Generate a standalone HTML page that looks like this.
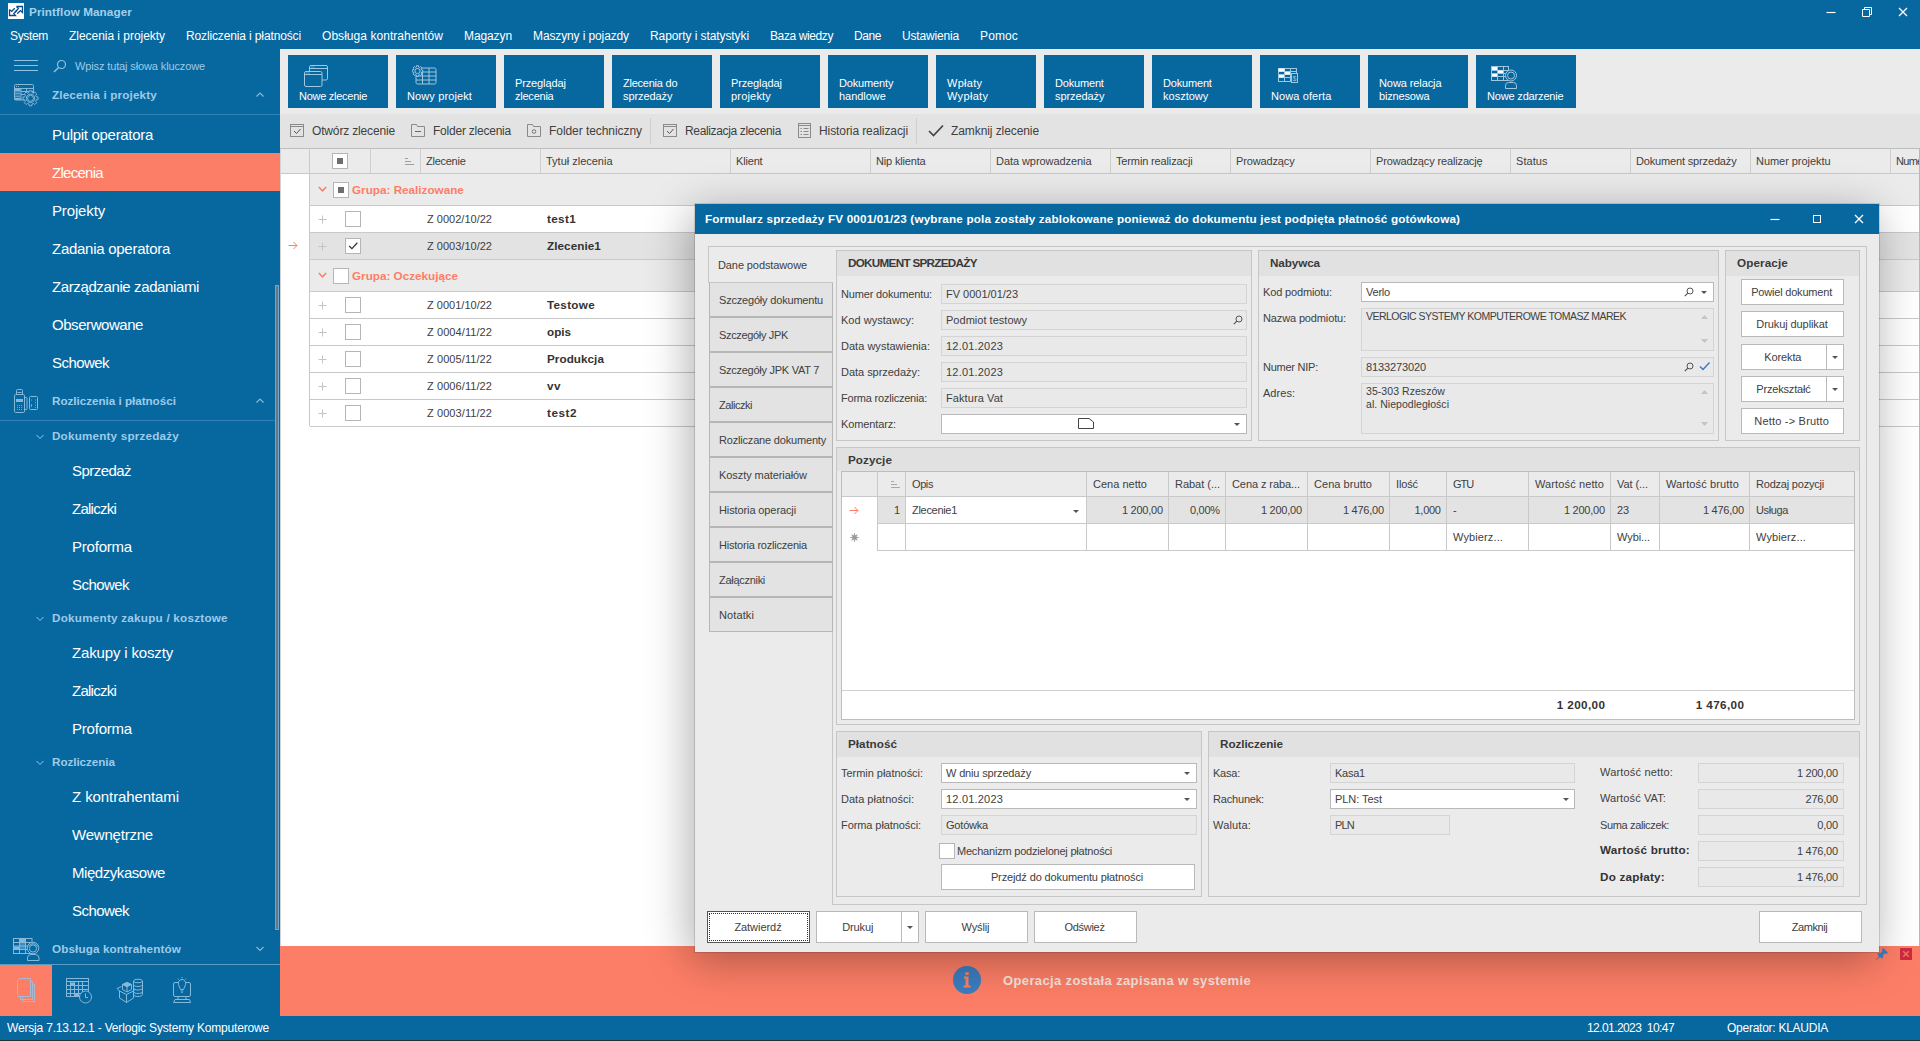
<!DOCTYPE html>
<html><head><meta charset="utf-8"><title>Printflow Manager</title>
<style>
html,body{margin:0;padding:0;}
body{width:1920px;height:1041px;overflow:hidden;background:#fff;font-family:"Liberation Sans",sans-serif;}
#r{position:relative;width:1920px;height:1041px;overflow:hidden;background:#fff;}
#r div,#r svg{position:absolute;}
</style></head><body><div id="r">
<div style="left:0px;top:0px;width:1920px;height:49px;background:#07679f;"></div>
<div style="left:0px;top:49px;width:280px;height:967px;background:#07679f;"></div>
<div style="left:0px;top:1016px;width:1920px;height:25px;background:#07679f;"></div>
<div style="left:280px;top:49px;width:1640px;height:65px;background:#ebebeb;"></div>
<div style="left:280px;top:114px;width:1640px;height:34px;background:#e3e3e3;"></div>
<svg style="left:8px;top:3px;" width="16" height="16" viewBox="0 0 16 16"><rect width="16" height="16" fill="#fff"/><g fill="none" stroke="#0b4a8a" stroke-width="1.300"><path d="M1.500 6.500V12.500H7.500L5.800 10.600L9.200 7.200M1.500 6.500L3.600 8.400L6.800 5.200"/><path d="M8.500 3.500H14.500V9.500L12.400 7.600L9.200 10.800M8.500 3.500L10.400 5.600L7 9"/></g></svg>
<div style="top:3.47px;line-height:17px;font-size:11.7px;color:#a3d0ea;white-space:pre;letter-spacing:0.093px;font-weight:bold;left:29px;">Printflow Manager</div>
<svg style="left:1826px;top:7px;" width="10" height="10" viewBox="0 0 10 10"><path d="M0.5 5.5H9.5" stroke="#fff" stroke-width="1.2" fill="none"/></svg>
<svg style="left:1862px;top:7px;" width="10" height="10" viewBox="0 0 10 10"><path d="M2.5 2.5V0.5H9.5V7.5H7.5 M0.5 2.5H7.5V9.5H0.5Z" stroke="#fff" stroke-width="1" fill="none"/></svg>
<svg style="left:1898px;top:7px;" width="10" height="10" viewBox="0 0 10 10"><path d="M1 1L9 9M9 1L1 9" stroke="#fff" stroke-width="1.3" fill="none"/></svg>
<div style="top:26.86px;line-height:18px;font-size:12px;color:#fff;white-space:pre;letter-spacing:-0.335px;left:10px;">System</div>
<div style="top:26.86px;line-height:18px;font-size:12px;color:#fff;white-space:pre;letter-spacing:-0.037px;left:69px;">Zlecenia i projekty</div>
<div style="top:26.86px;line-height:18px;font-size:12px;color:#fff;white-space:pre;letter-spacing:-0.133px;left:186px;">Rozliczenia i płatności</div>
<div style="top:26.86px;line-height:18px;font-size:12px;color:#fff;white-space:pre;letter-spacing:0.046px;left:322px;">Obsługa kontrahentów</div>
<div style="top:26.86px;line-height:18px;font-size:12px;color:#fff;white-space:pre;letter-spacing:-0.099px;left:464px;">Magazyn</div>
<div style="top:26.86px;line-height:18px;font-size:12px;color:#fff;white-space:pre;letter-spacing:-0.120px;left:533px;">Maszyny i pojazdy</div>
<div style="top:26.86px;line-height:18px;font-size:12px;color:#fff;white-space:pre;letter-spacing:-0.085px;left:650px;">Raporty i statystyki</div>
<div style="top:26.86px;line-height:18px;font-size:12px;color:#fff;white-space:pre;letter-spacing:-0.397px;left:770px;">Baza wiedzy</div>
<div style="top:26.86px;line-height:18px;font-size:12px;color:#fff;white-space:pre;letter-spacing:-0.422px;left:854px;">Dane</div>
<div style="top:26.86px;line-height:18px;font-size:12px;color:#fff;white-space:pre;letter-spacing:-0.170px;left:902px;">Ustawienia</div>
<div style="top:26.86px;line-height:18px;font-size:12px;color:#fff;white-space:pre;letter-spacing:0.130px;left:980px;">Pomoc</div>
<svg style="left:14px;top:59px;" width="24" height="14" viewBox="0 0 24 14"><path d="M0 1.5H24M0 6.5H24M0 11.5H24" stroke="#8fc3e3" stroke-width="1"/></svg>
<svg style="left:53px;top:59px;" width="14" height="14" viewBox="0 0 14 14"><circle cx="8.5" cy="5.5" r="4" stroke="#8fc3e3" stroke-width="1.2" fill="none"/><path d="M5.6 8.4L1 13" stroke="#8fc3e3" stroke-width="1.4"/></svg>
<div style="top:57.71px;line-height:17px;font-size:11px;color:#9dcbe8;white-space:pre;letter-spacing:-0.126px;left:75px;">Wpisz tutaj słowa kluczowe</div>
<div style="top:86.47px;line-height:17px;font-size:11.7px;color:#9dcbe8;white-space:pre;letter-spacing:0.153px;font-weight:bold;left:52px;">Zlecenia i projekty</div>
<svg style="left:256px;top:91px;" width="8" height="8" viewBox="0 0 8 8"><path d="M0.5 5.5L4 2L7.5 5.5" stroke="#86b8da" stroke-width="1.200" fill="none"/></svg>
<div style="left:0px;top:114px;width:280px;height:1px;background:#2f82b3;"></div>
<div style="left:0px;top:153px;width:280px;height:38px;background:#fd7e66;"></div>
<div style="top:124.32px;line-height:21px;font-size:15px;color:#fff;white-space:pre;letter-spacing:-0.307px;left:52px;">Pulpit operatora</div>
<div style="top:162.32px;line-height:21px;font-size:15px;color:#fff;white-space:pre;letter-spacing:-0.712px;left:52px;">Zlecenia</div>
<div style="top:200.32px;line-height:21px;font-size:15px;color:#fff;white-space:pre;letter-spacing:-0.148px;left:52px;">Projekty</div>
<div style="top:238.32px;line-height:21px;font-size:15px;color:#fff;white-space:pre;letter-spacing:-0.270px;left:52px;">Zadania operatora</div>
<div style="top:276.32px;line-height:21px;font-size:15px;color:#fff;white-space:pre;letter-spacing:-0.385px;left:52px;">Zarządzanie zadaniami</div>
<div style="top:314.32px;line-height:21px;font-size:15px;color:#fff;white-space:pre;letter-spacing:-0.444px;left:52px;">Obserwowane</div>
<div style="top:352.32px;line-height:21px;font-size:15px;color:#fff;white-space:pre;letter-spacing:-0.552px;left:52px;">Schowek</div>
<div style="top:392.47px;line-height:17px;font-size:11.7px;color:#9dcbe8;white-space:pre;letter-spacing:-0.036px;font-weight:bold;left:52px;">Rozliczenia i płatności</div>
<svg style="left:256px;top:397px;" width="8" height="8" viewBox="0 0 8 8"><path d="M0.5 5.5L4 2L7.5 5.5" stroke="#86b8da" stroke-width="1.200" fill="none"/></svg>
<div style="left:0px;top:420px;width:275px;height:1px;background:#2f82b3;"></div>
<svg style="left:36px;top:433px;" width="8" height="8" viewBox="0 0 8 8"><path d="M0.5 2L4 5.5L7.5 2" stroke="#9dcbe8" stroke-width="1" fill="none"/></svg>
<div style="top:427.47px;line-height:17px;font-size:11.7px;color:#9dcbe8;white-space:pre;letter-spacing:0.182px;font-weight:bold;left:52px;">Dokumenty sprzedaży</div>
<div style="top:460.32px;line-height:21px;font-size:15px;color:#fff;white-space:pre;letter-spacing:-0.546px;left:72px;">Sprzedaż</div>
<div style="top:498.32px;line-height:21px;font-size:15px;color:#fff;white-space:pre;letter-spacing:-0.750px;left:72px;">Zaliczki</div>
<div style="top:536.32px;line-height:21px;font-size:15px;color:#fff;white-space:pre;letter-spacing:-0.211px;left:72px;">Proforma</div>
<div style="top:574.32px;line-height:21px;font-size:15px;color:#fff;white-space:pre;letter-spacing:-0.552px;left:72px;">Schowek</div>
<svg style="left:36px;top:615px;" width="8" height="8" viewBox="0 0 8 8"><path d="M0.5 2L4 5.5L7.5 2" stroke="#9dcbe8" stroke-width="1" fill="none"/></svg>
<div style="top:609.47px;line-height:17px;font-size:11.7px;color:#9dcbe8;white-space:pre;letter-spacing:0.234px;font-weight:bold;left:52px;">Dokumenty zakupu / kosztowe</div>
<div style="top:642.32px;line-height:21px;font-size:15px;color:#fff;white-space:pre;letter-spacing:-0.158px;left:72px;">Zakupy i koszty</div>
<div style="top:680.32px;line-height:21px;font-size:15px;color:#fff;white-space:pre;letter-spacing:-0.750px;left:72px;">Zaliczki</div>
<div style="top:718.32px;line-height:21px;font-size:15px;color:#fff;white-space:pre;letter-spacing:-0.211px;left:72px;">Proforma</div>
<svg style="left:36px;top:759px;" width="8" height="8" viewBox="0 0 8 8"><path d="M0.5 2L4 5.5L7.5 2" stroke="#9dcbe8" stroke-width="1" fill="none"/></svg>
<div style="top:753.47px;line-height:17px;font-size:11.7px;color:#9dcbe8;white-space:pre;letter-spacing:-0.065px;font-weight:bold;left:52px;">Rozliczenia</div>
<div style="top:786.32px;line-height:21px;font-size:15px;color:#fff;white-space:pre;letter-spacing:-0.092px;left:72px;">Z kontrahentami</div>
<div style="top:824.32px;line-height:21px;font-size:15px;color:#fff;white-space:pre;letter-spacing:-0.210px;left:72px;">Wewnętrzne</div>
<div style="top:862.32px;line-height:21px;font-size:15px;color:#fff;white-space:pre;letter-spacing:-0.448px;left:72px;">Międzykasowe</div>
<div style="top:900.32px;line-height:21px;font-size:15px;color:#fff;white-space:pre;letter-spacing:-0.552px;left:72px;">Schowek</div>
<div style="top:940.47px;line-height:17px;font-size:11.7px;color:#9dcbe8;white-space:pre;letter-spacing:0.112px;font-weight:bold;left:52px;">Obsługa kontrahentów</div>
<svg style="left:256px;top:945px;" width="8" height="8" viewBox="0 0 8 8"><path d="M0.5 2L4 5.5L7.5 2" stroke="#86b8da" stroke-width="1.200" fill="none"/></svg>
<div style="left:0px;top:964px;width:280px;height:1px;background:#5a9cc4;"></div>
<div style="left:0px;top:965px;width:52px;height:51px;background:#fd7e66;"></div>
<div style="left:275px;top:285px;width:4px;height:645px;background:#6ea7cc;"></div>
<div style="left:276px;top:286px;width:2px;height:643px;background:#687883;"></div>
<div style="top:1018.86px;line-height:18px;font-size:12px;color:#fff;white-space:pre;letter-spacing:-0.182px;left:7px;">Wersja 7.13.12.1 - Verlogic Systemy Komputerowe</div>
<div style="top:1018.86px;line-height:18px;font-size:12px;color:#fff;white-space:pre;letter-spacing:-0.574px;left:1587px;">12.01.2023  10:47</div>
<div style="top:1018.86px;line-height:18px;font-size:12px;color:#fff;white-space:pre;letter-spacing:-0.258px;left:1727px;">Operator: KLAUDIA</div>
<div style="left:0px;top:1040px;width:1920px;height:1px;background:#2b2f33;"></div>
<div style="left:288px;top:55px;width:100px;height:53px;background:#07679f;"></div>
<svg style="left:304px;top:65px;" width="24" height="23" viewBox="0 0 24 23"><g fill="none" stroke="#9fc7e0" stroke-width="1"><rect x="5.500" y="0.500" width="18" height="14.500" rx="1.500"/><path d="M5.500 3.500H23.500"/><path d="M7.500 2H10.500" stroke-dasharray="1 1"/><rect x="0.500" y="6.500" width="17.500" height="15" rx="1.500" fill="#07679f"/><path d="M0.500 9.500H18"/><path d="M2.500 8H5.500" stroke-dasharray="1 1"/></g></svg>
<div style="top:87.71px;line-height:17px;font-size:11px;color:#fff;white-space:pre;letter-spacing:-0.272px;left:299px;">Nowe zlecenie</div>
<div style="left:396px;top:55px;width:100px;height:53px;background:#07679f;"></div>
<svg style="left:412px;top:64.5px;" width="25" height="20" viewBox="0 0 25 20"><g fill="none" stroke="#9fc7e0" stroke-width="1"><rect x="4" y="3" width="20" height="16" rx="1.500"/><path d="M4 7H24M4 11H24M4 15H24M10.500 7V19M17 3V19"/><path d="M10.82 5.07L10.82 6.93L9.57 7.04L9.12 8.14L9.92 9.11L8.61 10.42L7.64 9.62L6.54 10.07L6.43 11.32L4.57 11.32L4.46 10.07L3.36 9.62L2.39 10.42L1.08 9.11L1.88 8.14L1.43 7.04L0.18 6.93L0.18 5.07L1.43 4.96L1.88 3.86L1.08 2.89L2.39 1.58L3.36 2.38L4.46 1.93L4.57 0.68L6.43 0.68L6.54 1.93L7.64 2.38L8.61 1.58L9.92 2.89L9.12 3.86L9.57 4.96Z" fill="#07679f"/><circle cx="5.500" cy="6" r="2.600"/></g></svg>
<div style="top:87.71px;line-height:17px;font-size:11px;color:#fff;white-space:pre;letter-spacing:0.118px;left:407px;">Nowy projekt</div>
<div style="left:504px;top:55px;width:100px;height:53px;background:#07679f;"></div>
<div style="top:74.71px;line-height:17px;font-size:11px;color:#fff;white-space:pre;letter-spacing:-0.128px;left:515px;">Przeglądaj</div>
<div style="top:87.71px;line-height:17px;font-size:11px;color:#fff;white-space:pre;letter-spacing:-0.232px;left:515px;">zlecenia</div>
<div style="left:612px;top:55px;width:100px;height:53px;background:#07679f;"></div>
<div style="top:74.71px;line-height:17px;font-size:11px;color:#fff;white-space:pre;letter-spacing:-0.234px;left:623px;">Zlecenia do</div>
<div style="top:87.71px;line-height:17px;font-size:11px;color:#fff;white-space:pre;letter-spacing:-0.093px;left:623px;">sprzedaży</div>
<div style="left:720px;top:55px;width:100px;height:53px;background:#07679f;"></div>
<div style="top:74.71px;line-height:17px;font-size:11px;color:#fff;white-space:pre;letter-spacing:-0.128px;left:731px;">Przeglądaj</div>
<div style="top:87.71px;line-height:17px;font-size:11px;color:#fff;white-space:pre;letter-spacing:0.185px;left:731px;">projekty</div>
<div style="left:828px;top:55px;width:100px;height:53px;background:#07679f;"></div>
<div style="top:74.71px;line-height:17px;font-size:11px;color:#fff;white-space:pre;letter-spacing:-0.148px;left:839px;">Dokumenty</div>
<div style="top:87.71px;line-height:17px;font-size:11px;color:#fff;white-space:pre;letter-spacing:-0.049px;left:839px;">handlowe</div>
<div style="left:936px;top:55px;width:100px;height:53px;background:#07679f;"></div>
<div style="top:74.71px;line-height:17px;font-size:11px;color:#fff;white-space:pre;letter-spacing:0.280px;left:947px;">Wpłaty</div>
<div style="top:87.71px;line-height:17px;font-size:11px;color:#fff;white-space:pre;letter-spacing:0.325px;left:947px;">Wypłaty</div>
<div style="left:1044px;top:55px;width:100px;height:53px;background:#07679f;"></div>
<div style="top:74.71px;line-height:17px;font-size:11px;color:#fff;white-space:pre;letter-spacing:-0.179px;left:1055px;">Dokument</div>
<div style="top:87.71px;line-height:17px;font-size:11px;color:#fff;white-space:pre;letter-spacing:-0.093px;left:1055px;">sprzedaży</div>
<div style="left:1152px;top:55px;width:100px;height:53px;background:#07679f;"></div>
<div style="top:74.71px;line-height:17px;font-size:11px;color:#fff;white-space:pre;letter-spacing:-0.179px;left:1163px;">Dokument</div>
<div style="top:87.71px;line-height:17px;font-size:11px;color:#fff;white-space:pre;letter-spacing:0.008px;left:1163px;">kosztowy</div>
<div style="left:1260px;top:55px;width:100px;height:53px;background:#07679f;"></div>
<svg style="left:1278px;top:68px;" width="22" height="18" viewBox="0 0 22 18"><g fill="none" stroke="#9fc7e0" stroke-width="1"><rect x="0.5" y="0.5" width="18" height="13" fill="#07679f"/><path d="M0.5 3.5H18.5M0.5 6.500H18.5M0.5 9.5H18.5M6.5 0.5V13.500M12.500 0.5V13.5"/><rect x="0.5" y="0.5" width="6" height="3" fill="#fff" stroke="none"/><rect x="7" y="4" width="5" height="2.500" fill="#fff" stroke="none"/><rect x="1" y="7" width="5" height="2.5" fill="#fff" stroke="none"/><rect x="13.5" y="5.500" width="6" height="9" fill="#07679f"/></g><text x="16.5" y="13" font-size="7" fill="#9fc7e0" text-anchor="middle" font-family="Liberation Sans">$</text></svg>
<div style="top:87.71px;line-height:17px;font-size:11px;color:#fff;white-space:pre;letter-spacing:0.108px;left:1271px;">Nowa oferta</div>
<div style="left:1368px;top:55px;width:100px;height:53px;background:#07679f;"></div>
<div style="top:74.71px;line-height:17px;font-size:11px;color:#fff;white-space:pre;letter-spacing:-0.090px;left:1379px;">Nowa relacja</div>
<div style="top:87.71px;line-height:17px;font-size:11px;color:#fff;white-space:pre;letter-spacing:-0.164px;left:1379px;">biznesowa</div>
<div style="left:1476px;top:55px;width:100px;height:53px;background:#07679f;"></div>
<svg style="left:1491px;top:66px;" width="28" height="24" viewBox="0 0 28 24"><g fill="none" stroke="#9fc7e0" stroke-width="1"><rect x="0.5" y="0.5" width="17" height="14"/><path d="M0.5 4.500H17.5M0.5 7.5H17.5M0.5 10.500H17.5M6.5 0.5V14.5M12.5 0.500V14.5"/><rect x="1" y="1" width="5" height="3" fill="#fff" stroke="none"/><rect x="7" y="4.500" width="5" height="2.500" fill="#fff" stroke="none"/><rect x="1" y="8" width="5" height="2.500" fill="#fff" stroke="none"/><circle cx="20" cy="9.500" r="5.500" fill="#07679f"/><circle cx="20" cy="9.500" r="3.500"/><path d="M14.500 22.5V19.500a3 3 0 0 1 3-3H22.500a3 3 0 0 1 3 3V22.500Z" fill="#07679f"/></g></svg>
<div style="top:87.71px;line-height:17px;font-size:11px;color:#fff;white-space:pre;letter-spacing:-0.170px;left:1487px;">Nowe zdarzenie</div>
<svg style="left:290px;top:124px;" width="15" height="13" viewBox="0 0 15 13"><g fill="none" stroke="#8a8a8a" stroke-width="1"><rect x="0.5" y="0.5" width="13" height="12"/><path d="M0.5 2.5H13.500"/><path d="M4 7L6.500 9.500L10.500 5" stroke="#555"/></g></svg>
<div style="top:121.86px;line-height:18px;font-size:12px;color:#404040;white-space:pre;letter-spacing:-0.158px;left:312px;">Otwórz zlecenie</div>
<svg style="left:411px;top:124px;" width="15" height="13" viewBox="0 0 15 13"><g fill="none" stroke="#8a8a8a" stroke-width="1"><path d="M0.5 12.5V0.5H5.500L6.500 2.5H13.500V12.500Z"/><path d="M4 7.500H10" stroke="#666"/></g></svg>
<div style="top:121.86px;line-height:18px;font-size:12px;color:#404040;white-space:pre;letter-spacing:-0.225px;left:433px;">Folder zlecenia</div>
<svg style="left:527px;top:124px;" width="15" height="13" viewBox="0 0 15 13"><g fill="none" stroke="#8a8a8a" stroke-width="1"><path d="M0.5 12.5V0.5H5.500L6.500 2.5H13.500V12.500Z"/><circle cx="7" cy="7.500" r="1.800" stroke="#777"/></g></svg>
<div style="top:121.86px;line-height:18px;font-size:12px;color:#404040;white-space:pre;letter-spacing:-0.061px;left:549px;">Folder techniczny</div>
<div style="left:650px;top:118px;width:1px;height:26px;background:#cfcfcf;"></div>
<svg style="left:663px;top:124px;" width="15" height="13" viewBox="0 0 15 13"><g fill="none" stroke="#8a8a8a" stroke-width="1"><rect x="0.5" y="0.5" width="13" height="12"/><path d="M0.5 2.5H13.500"/><path d="M4 7L6.500 9.500L10.500 5" stroke="#555"/></g></svg>
<div style="top:121.86px;line-height:18px;font-size:12px;color:#404040;white-space:pre;letter-spacing:-0.354px;left:685px;">Realizacja zlecenia</div>
<svg style="left:797px;top:123px;" width="15" height="15" viewBox="0 0 15 15"><g fill="none" stroke="#8a8a8a" stroke-width="1"><rect x="1.5" y="0.5" width="12" height="14"/><path d="M1.5 2.500H13.5"/><path d="M3.500 5.5H5M6.500 5.500H11.5M3.5 8.500H5M6.5 8.500H11.5M3.5 11.5H5M6.500 11.5H11.5"/></g></svg>
<div style="top:121.86px;line-height:18px;font-size:12px;color:#404040;white-space:pre;letter-spacing:-0.089px;left:819px;">Historia realizacji</div>
<div style="left:916px;top:118px;width:1px;height:26px;background:#cfcfcf;"></div>
<svg style="left:928px;top:124px;" width="16" height="13" viewBox="0 0 16 13"><path d="M1 7L5.500 11.500L15 1.500" stroke="#444" stroke-width="1.700" fill="none"/></svg>
<div style="top:121.86px;line-height:18px;font-size:12px;color:#404040;white-space:pre;letter-spacing:-0.086px;left:951px;">Zamknij zlecenie</div>
<div style="left:280px;top:148px;width:1640px;height:26px;background:#ebebeb;"></div>
<div style="left:280px;top:148px;width:1640px;height:1px;background:#bdbdbd;"></div>
<div style="left:280px;top:173px;width:1640px;height:1px;background:#c9c9c9;"></div>
<div style="left:309px;top:149px;width:1px;height:24px;background:#cfcfcf;"></div>
<div style="left:370px;top:149px;width:1px;height:24px;background:#cfcfcf;"></div>
<div style="left:420px;top:149px;width:1px;height:24px;background:#cfcfcf;"></div>
<div style="top:152.71px;line-height:17px;font-size:11px;color:#404040;white-space:pre;letter-spacing:-0.260px;left:426px;">Zlecenie</div>
<div style="left:540px;top:149px;width:1px;height:24px;background:#cfcfcf;"></div>
<div style="top:152.71px;line-height:17px;font-size:11px;color:#404040;white-space:pre;letter-spacing:-0.010px;left:546px;">Tytuł zlecenia</div>
<div style="left:730px;top:149px;width:1px;height:24px;background:#cfcfcf;"></div>
<div style="top:152.71px;line-height:17px;font-size:11px;color:#404040;white-space:pre;letter-spacing:-0.170px;left:736px;">Klient</div>
<div style="left:870px;top:149px;width:1px;height:24px;background:#cfcfcf;"></div>
<div style="top:152.71px;line-height:17px;font-size:11px;color:#404040;white-space:pre;letter-spacing:-0.169px;left:876px;">Nip klienta</div>
<div style="left:990px;top:149px;width:1px;height:24px;background:#cfcfcf;"></div>
<div style="top:152.71px;line-height:17px;font-size:11px;color:#404040;white-space:pre;letter-spacing:-0.065px;left:996px;">Data wprowadzenia</div>
<div style="left:1110px;top:149px;width:1px;height:24px;background:#cfcfcf;"></div>
<div style="top:152.71px;line-height:17px;font-size:11px;color:#404040;white-space:pre;letter-spacing:-0.139px;left:1116px;">Termin realizacji</div>
<div style="left:1230px;top:149px;width:1px;height:24px;background:#cfcfcf;"></div>
<div style="top:152.71px;line-height:17px;font-size:11px;color:#404040;white-space:pre;letter-spacing:-0.142px;left:1236px;">Prowadzący</div>
<div style="left:1370px;top:149px;width:1px;height:24px;background:#cfcfcf;"></div>
<div style="top:152.71px;line-height:17px;font-size:11px;color:#404040;white-space:pre;letter-spacing:-0.140px;left:1376px;">Prowadzący realizację</div>
<div style="left:1510px;top:149px;width:1px;height:24px;background:#cfcfcf;"></div>
<div style="top:152.71px;line-height:17px;font-size:11px;color:#404040;white-space:pre;letter-spacing:0.053px;left:1516px;">Status</div>
<div style="left:1630px;top:149px;width:1px;height:24px;background:#cfcfcf;"></div>
<div style="top:152.71px;line-height:17px;font-size:11px;color:#404040;white-space:pre;letter-spacing:-0.157px;left:1636px;">Dokument sprzedaży</div>
<div style="left:1750px;top:149px;width:1px;height:24px;background:#cfcfcf;"></div>
<div style="top:152.71px;line-height:17px;font-size:11px;color:#404040;white-space:pre;letter-spacing:-0.050px;left:1756px;">Numer projektu</div>
<div style="left:1890px;top:149px;width:1px;height:24px;background:#cfcfcf;"></div>
<div style="top:152.71px;line-height:17px;font-size:11px;color:#404040;white-space:pre;letter-spacing:-0.701px;left:1896px;">Numer</div>
<div style="left:309px;top:148px;width:1px;height:278px;background:#c9c9c9;"></div>
<div style="left:332px;top:153px;width:16px;height:16px;background:#fff;border:1px solid #b5b5b5;box-sizing:border-box;"><div style="left:4px;top:4px;width:6px;height:6px;background:#6e6e6e"></div></div>
<svg style="left:405px;top:157px;" width="9" height="8" viewBox="0 0 9 8"><path d="M0 1.500H3M0 4.500H6M0 7.500H9" stroke="#a0a0a0" stroke-width="1"/></svg>
<div style="left:310px;top:174px;width:1610px;height:32px;background:#ebebeb;"></div>
<div style="left:310px;top:205px;width:1610px;height:1px;background:#c9c9c9;"></div>
<svg style="left:318px;top:186px;" width="9" height="7" viewBox="0 0 9 7"><path d="M0.800 1L4.500 4.800L8.200 1" stroke="#fd7e66" stroke-width="1.500" fill="none"/></svg>
<div style="left:333px;top:182px;width:16px;height:16px;background:#fff;border:1px solid #b5b5b5;box-sizing:border-box;"><div style="left:4px;top:4px;width:6px;height:6px;background:#6e6e6e"></div></div>
<div style="top:181.47px;line-height:17px;font-size:11.7px;color:#fd7e66;white-space:pre;letter-spacing:0.010px;font-weight:bold;left:352px;">Grupa: Realizowane</div>
<div style="left:310px;top:206px;width:1610px;height:27px;background:#fff;"></div>
<div style="left:310px;top:232px;width:1610px;height:1px;background:#c9c9c9;"></div>
<svg style="left:318px;top:215px;" width="9" height="9" viewBox="0 0 9 9"><path d="M4.500 0.500V8.500M0.500 4.500H8.500" stroke="#c4c4c4" stroke-width="1"/></svg>
<div style="left:345px;top:211px;width:16px;height:16px;background:#fff;border:1px solid #b5b5b5;box-sizing:border-box;"></div>
<div style="top:210.71px;line-height:17px;font-size:11px;color:#404040;white-space:pre;letter-spacing:0.014px;left:427px;">Z 0002/10/22</div>
<div style="top:210.47px;line-height:17px;font-size:11.7px;color:#333;white-space:pre;letter-spacing:0.337px;font-weight:bold;left:547px;">test1</div>
<div style="left:310px;top:233px;width:1610px;height:27px;background:#e3e3e3;"></div>
<div style="left:310px;top:259px;width:1610px;height:1px;background:#c9c9c9;"></div>
<svg style="left:318px;top:242px;" width="9" height="9" viewBox="0 0 9 9"><path d="M4.500 0.500V8.500M0.500 4.500H8.500" stroke="#c4c4c4" stroke-width="1"/></svg>
<div style="left:345px;top:238px;width:16px;height:16px;background:#fff;border:1px solid #b5b5b5;box-sizing:border-box;"><svg style="left:1px;top:1px" width="12" height="12" viewBox="0 0 11 11"><path d="M2 5.500L4.500 8L9.500 2.500" stroke="#333" stroke-width="1.100" fill="none"/></svg></div>
<div style="top:237.71px;line-height:17px;font-size:11px;color:#404040;white-space:pre;letter-spacing:0.014px;left:427px;">Z 0003/10/22</div>
<div style="top:237.47px;line-height:17px;font-size:11.7px;color:#333;white-space:pre;letter-spacing:0.074px;font-weight:bold;left:547px;">Zlecenie1</div>
<div style="left:310px;top:260px;width:1610px;height:32px;background:#ebebeb;"></div>
<div style="left:310px;top:291px;width:1610px;height:1px;background:#c9c9c9;"></div>
<svg style="left:318px;top:272px;" width="9" height="7" viewBox="0 0 9 7"><path d="M0.800 1L4.500 4.800L8.200 1" stroke="#fd7e66" stroke-width="1.500" fill="none"/></svg>
<div style="left:333px;top:268px;width:16px;height:16px;background:#fff;border:1px solid #b5b5b5;box-sizing:border-box;"></div>
<div style="top:267.47px;line-height:17px;font-size:11.7px;color:#fd7e66;white-space:pre;letter-spacing:0.000px;font-weight:bold;left:352px;">Grupa: Oczekujące</div>
<div style="left:310px;top:292px;width:1610px;height:27px;background:#fff;"></div>
<div style="left:310px;top:318px;width:1610px;height:1px;background:#c9c9c9;"></div>
<svg style="left:318px;top:301px;" width="9" height="9" viewBox="0 0 9 9"><path d="M4.500 0.500V8.500M0.500 4.500H8.500" stroke="#c4c4c4" stroke-width="1"/></svg>
<div style="left:345px;top:297px;width:16px;height:16px;background:#fff;border:1px solid #b5b5b5;box-sizing:border-box;"></div>
<div style="top:296.71px;line-height:17px;font-size:11px;color:#404040;white-space:pre;letter-spacing:0.014px;left:427px;">Z 0001/10/22</div>
<div style="top:296.47px;line-height:17px;font-size:11.7px;color:#333;white-space:pre;letter-spacing:0.294px;font-weight:bold;left:547px;">Testowe</div>
<div style="left:310px;top:319px;width:1610px;height:27px;background:#fff;"></div>
<div style="left:310px;top:345px;width:1610px;height:1px;background:#c9c9c9;"></div>
<svg style="left:318px;top:328px;" width="9" height="9" viewBox="0 0 9 9"><path d="M4.500 0.500V8.500M0.500 4.500H8.500" stroke="#c4c4c4" stroke-width="1"/></svg>
<div style="left:345px;top:324px;width:16px;height:16px;background:#fff;border:1px solid #b5b5b5;box-sizing:border-box;"></div>
<div style="top:323.71px;line-height:17px;font-size:11px;color:#404040;white-space:pre;letter-spacing:0.082px;left:427px;">Z 0004/11/22</div>
<div style="top:323.47px;line-height:17px;font-size:11.7px;color:#333;white-space:pre;letter-spacing:-0.013px;font-weight:bold;left:547px;">opis</div>
<div style="left:310px;top:346px;width:1610px;height:27px;background:#fff;"></div>
<div style="left:310px;top:372px;width:1610px;height:1px;background:#c9c9c9;"></div>
<svg style="left:318px;top:355px;" width="9" height="9" viewBox="0 0 9 9"><path d="M4.500 0.500V8.500M0.500 4.500H8.500" stroke="#c4c4c4" stroke-width="1"/></svg>
<div style="left:345px;top:351px;width:16px;height:16px;background:#fff;border:1px solid #b5b5b5;box-sizing:border-box;"></div>
<div style="top:350.71px;line-height:17px;font-size:11px;color:#404040;white-space:pre;letter-spacing:0.082px;left:427px;">Z 0005/11/22</div>
<div style="top:350.47px;line-height:17px;font-size:11.7px;color:#333;white-space:pre;letter-spacing:0.048px;font-weight:bold;left:547px;">Produkcja</div>
<div style="left:310px;top:373px;width:1610px;height:27px;background:#fff;"></div>
<div style="left:310px;top:399px;width:1610px;height:1px;background:#c9c9c9;"></div>
<svg style="left:318px;top:382px;" width="9" height="9" viewBox="0 0 9 9"><path d="M4.500 0.500V8.500M0.500 4.500H8.500" stroke="#c4c4c4" stroke-width="1"/></svg>
<div style="left:345px;top:378px;width:16px;height:16px;background:#fff;border:1px solid #b5b5b5;box-sizing:border-box;"></div>
<div style="top:377.71px;line-height:17px;font-size:11px;color:#404040;white-space:pre;letter-spacing:0.082px;left:427px;">Z 0006/11/22</div>
<div style="top:377.47px;line-height:17px;font-size:11.7px;color:#333;white-space:pre;letter-spacing:0.493px;font-weight:bold;left:547px;">vv</div>
<div style="left:310px;top:400px;width:1610px;height:27px;background:#fff;"></div>
<div style="left:310px;top:426px;width:1610px;height:1px;background:#c9c9c9;"></div>
<svg style="left:318px;top:409px;" width="9" height="9" viewBox="0 0 9 9"><path d="M4.500 0.500V8.500M0.500 4.500H8.500" stroke="#c4c4c4" stroke-width="1"/></svg>
<div style="left:345px;top:405px;width:16px;height:16px;background:#fff;border:1px solid #b5b5b5;box-sizing:border-box;"></div>
<div style="top:404.71px;line-height:17px;font-size:11px;color:#404040;white-space:pre;letter-spacing:0.082px;left:427px;">Z 0003/11/22</div>
<div style="top:404.47px;line-height:17px;font-size:11.7px;color:#333;white-space:pre;letter-spacing:0.537px;font-weight:bold;left:547px;">test2</div>
<div style="left:1919px;top:148px;width:1px;height:798px;background:#b8b8b8;"></div>
<div style="left:280px;top:149px;width:1px;height:797px;background:#d0d3d5;"></div>
<svg style="left:288px;top:241px;" width="10" height="9" viewBox="0 0 10 9"><path d="M0.500 4.500H9M5.500 1L9 4.500L5.500 8" stroke="#fd7e66" stroke-width="1" fill="none"/></svg>
<div style="left:280px;top:946px;width:1640px;height:70px;background:#fd7e66;"></div>
<svg style="left:953px;top:966px;" width="28" height="28" viewBox="0 0 28 28"><circle cx="14" cy="14" r="14" fill="#3b7dbf"/><path d="M11 10.500H15.500V19.500H17.500V21.500H10.500V19.500H12.500V12.500H11Z M12.300 6.200H15.700V9H12.300Z" fill="#fd7e66"/></svg>
<div style="top:971.02px;line-height:19px;font-size:13px;color:#f7e4de;white-space:pre;letter-spacing:0.366px;font-weight:bold;left:1003px;">Operacja została zapisana w systemie</div>
<svg style="left:1876px;top:948px;" width="12" height="12" viewBox="0 0 12 12"><path d="M6.200 0.500L7.500 0.300L11.700 4.600L11.300 5.800L8.600 5.600L7 7.500L7 10L5.800 10.600L4 9L0.500 12L0.200 11.600L3 8L1.500 6.500L1.800 5.300L4.500 5L6.300 3.300Z" fill="#3a7fc5"/></svg>
<div style="left:1900px;top:948px;width:12px;height:12px;background:#cf2a40;"><svg style="left:3px;top:3px" width="6" height="6"><path d="M0.300 0.300L5.700 5.700M5.700 0.300L0.300 5.700" stroke="#f47a64" stroke-width="1.400"/></svg></div>
<div style="left:695px;top:204px;width:1184px;height:748px;background:#ebebeb;box-shadow:0 0 0 1px rgba(0,0,0,0.13),-4px 8px 42px 0 rgba(0,0,0,0.33);"></div>
<div style="left:695px;top:204px;width:1184px;height:30px;background:#07679f;"></div>
<div style="top:209.97px;line-height:18px;font-size:11.7px;color:#fff;white-space:pre;letter-spacing:0.173px;font-weight:bold;left:705px;">Formularz sprzedaży FV 0001/01/23 (wybrane pola zostały zablokowane ponieważ do dokumentu jest podpięta płatność gotówkowa)</div>
<svg style="left:1770px;top:214px;" width="10" height="10" viewBox="0 0 10 10"><path d="M0.500 5.500H9.500" stroke="#fff" stroke-width="1.200" fill="none"/></svg>
<svg style="left:1812px;top:214px;" width="10" height="10" viewBox="0 0 10 10"><rect x="1.500" y="1.500" width="7" height="7" stroke="#fff" stroke-width="1" fill="none"/></svg>
<svg style="left:1854px;top:214px;" width="10" height="10" viewBox="0 0 10 10"><path d="M1 1L9 9M9 1L1 9" stroke="#fff" stroke-width="1.400" fill="none"/></svg>
<div style="left:832px;top:246px;width:1035px;height:659px;background:#ebebeb;border:1px solid #c6c6c6;box-sizing:border-box;"></div>
<div style="left:709px;top:282px;width:124px;height:35px;background:#e3e3e3;border:1px solid #b6b6b6;box-sizing:border-box;"></div>
<div style="top:291.71px;line-height:17px;font-size:11px;color:#404040;white-space:pre;letter-spacing:-0.190px;left:719px;">Szczegóły dokumentu</div>
<div style="left:709px;top:317px;width:124px;height:35px;background:#e3e3e3;border:1px solid #b6b6b6;box-sizing:border-box;"></div>
<div style="top:326.71px;line-height:17px;font-size:11px;color:#404040;white-space:pre;letter-spacing:-0.336px;left:719px;">Szczegóły JPK</div>
<div style="left:709px;top:352px;width:124px;height:35px;background:#e3e3e3;border:1px solid #b6b6b6;box-sizing:border-box;"></div>
<div style="top:361.71px;line-height:17px;font-size:11px;color:#404040;white-space:pre;letter-spacing:-0.271px;left:719px;">Szczegóły JPK VAT 7</div>
<div style="left:709px;top:387px;width:124px;height:35px;background:#e3e3e3;border:1px solid #b6b6b6;box-sizing:border-box;"></div>
<div style="top:396.71px;line-height:17px;font-size:11px;color:#404040;white-space:pre;letter-spacing:-0.459px;left:719px;">Zaliczki</div>
<div style="left:709px;top:422px;width:124px;height:35px;background:#e3e3e3;border:1px solid #b6b6b6;box-sizing:border-box;"></div>
<div style="top:431.71px;line-height:17px;font-size:11px;color:#404040;white-space:pre;letter-spacing:-0.183px;left:719px;">Rozliczane dokumenty</div>
<div style="left:709px;top:457px;width:124px;height:35px;background:#e3e3e3;border:1px solid #b6b6b6;box-sizing:border-box;"></div>
<div style="top:466.71px;line-height:17px;font-size:11px;color:#404040;white-space:pre;letter-spacing:-0.074px;left:719px;">Koszty materiałów</div>
<div style="left:709px;top:492px;width:124px;height:35px;background:#e3e3e3;border:1px solid #b6b6b6;box-sizing:border-box;"></div>
<div style="top:501.71px;line-height:17px;font-size:11px;color:#404040;white-space:pre;letter-spacing:-0.110px;left:719px;">Historia operacji</div>
<div style="left:709px;top:527px;width:124px;height:35px;background:#e3e3e3;border:1px solid #b6b6b6;box-sizing:border-box;"></div>
<div style="top:536.71px;line-height:17px;font-size:11px;color:#404040;white-space:pre;letter-spacing:-0.216px;left:719px;">Historia rozliczenia</div>
<div style="left:709px;top:562px;width:124px;height:35px;background:#e3e3e3;border:1px solid #b6b6b6;box-sizing:border-box;"></div>
<div style="top:571.71px;line-height:17px;font-size:11px;color:#404040;white-space:pre;letter-spacing:-0.291px;left:719px;">Załączniki</div>
<div style="left:709px;top:597px;width:124px;height:35px;background:#e3e3e3;border:1px solid #b6b6b6;box-sizing:border-box;"></div>
<div style="top:606.71px;line-height:17px;font-size:11px;color:#404040;white-space:pre;letter-spacing:0.109px;left:719px;">Notatki</div>
<div style="left:708px;top:246px;width:125px;height:37px;background:#ebebeb;border:1px solid #c6c6c6;box-sizing:border-box;border-right:none;"></div>
<div style="top:256.71px;line-height:17px;font-size:11px;color:#404040;white-space:pre;letter-spacing:-0.100px;left:718px;">Dane podstawowe</div>
<div style="left:836px;top:250px;width:416px;height:191px;background:#ebebeb;border:1px solid #c6c6c6;box-sizing:border-box;"></div>
<div style="left:837px;top:251px;width:414px;height:25px;background:#e1e1e1;"></div>
<div style="top:254.47px;line-height:17px;font-size:11.7px;color:#3a3a3a;white-space:pre;letter-spacing:-0.706px;font-weight:bold;left:848px;">DOKUMENT SPRZEDAŻY</div>
<div style="top:285.71px;line-height:17px;font-size:11px;color:#404040;white-space:pre;letter-spacing:-0.159px;left:841px;">Numer dokumentu:</div>
<div style="left:941px;top:284px;width:306px;height:20px;background:#e9e9e9;border:1px solid #d4d4d4;box-sizing:border-box;"></div>
<div style="top:285.71px;line-height:17px;font-size:11px;color:#404040;white-space:pre;letter-spacing:-0.013px;left:946px;">FV 0001/01/23</div>
<div style="top:311.71px;line-height:17px;font-size:11px;color:#404040;white-space:pre;letter-spacing:0.019px;left:841px;">Kod wystawcy:</div>
<div style="left:941px;top:310px;width:306px;height:20px;background:#e9e9e9;border:1px solid #d4d4d4;box-sizing:border-box;"></div>
<div style="top:311.71px;line-height:17px;font-size:11px;color:#404040;white-space:pre;letter-spacing:0.020px;left:946px;">Podmiot testowy</div>
<div style="top:337.71px;line-height:17px;font-size:11px;color:#404040;white-space:pre;letter-spacing:0.021px;left:841px;">Data wystawienia:</div>
<div style="left:941px;top:336px;width:306px;height:20px;background:#e9e9e9;border:1px solid #d4d4d4;box-sizing:border-box;"></div>
<div style="top:337.71px;line-height:17px;font-size:11px;color:#404040;white-space:pre;letter-spacing:0.195px;left:946px;">12.01.2023</div>
<div style="top:363.71px;line-height:17px;font-size:11px;color:#404040;white-space:pre;letter-spacing:-0.032px;left:841px;">Data sprzedaży:</div>
<div style="left:941px;top:362px;width:306px;height:20px;background:#e9e9e9;border:1px solid #d4d4d4;box-sizing:border-box;"></div>
<div style="top:363.71px;line-height:17px;font-size:11px;color:#404040;white-space:pre;letter-spacing:0.195px;left:946px;">12.01.2023</div>
<div style="top:389.71px;line-height:17px;font-size:11px;color:#404040;white-space:pre;letter-spacing:-0.215px;left:841px;">Forma rozliczenia:</div>
<div style="left:941px;top:388px;width:306px;height:20px;background:#e9e9e9;border:1px solid #d4d4d4;box-sizing:border-box;"></div>
<div style="top:389.71px;line-height:17px;font-size:11px;color:#404040;white-space:pre;letter-spacing:0.087px;left:946px;">Faktura Vat</div>
<div style="top:415.71px;line-height:17px;font-size:11px;color:#404040;white-space:pre;letter-spacing:-0.125px;left:841px;">Komentarz:</div>
<div style="left:941px;top:414px;width:306px;height:20px;background:#fff;border:1px solid #b9b9b9;box-sizing:border-box;"></div>
<svg style="left:1233px;top:315px;" width="10" height="10" viewBox="0 0 10 10"><circle cx="6" cy="4" r="3" stroke="#555" stroke-width="1" fill="none"/><path d="M3.800 6.200L0.800 9.200" stroke="#555" stroke-width="1.200"/></svg>
<svg style="left:1078px;top:418px;" width="16" height="11" viewBox="0 0 16 11"><path d="M0.500 0.500H11L15.500 4V10.500H0.500Z" stroke="#444" stroke-width="1" fill="#fff"/></svg>
<svg style="left:1234px;top:422.5px;" width="6" height="3" viewBox="0 0 6 3"><path d="M0 0H6L3 3Z" fill="#555"/></svg>
<div style="left:1258px;top:250px;width:461px;height:191px;background:#ebebeb;border:1px solid #c6c6c6;box-sizing:border-box;"></div>
<div style="left:1259px;top:251px;width:459px;height:25px;background:#e1e1e1;"></div>
<div style="top:254.47px;line-height:17px;font-size:11.7px;color:#3a3a3a;white-space:pre;letter-spacing:-0.104px;font-weight:bold;left:1270px;">Nabywca</div>
<div style="top:283.71px;line-height:17px;font-size:11px;color:#404040;white-space:pre;letter-spacing:-0.149px;left:1263px;">Kod podmiotu:</div>
<div style="left:1361px;top:282px;width:353px;height:20px;background:#fff;border:1px solid #b9b9b9;box-sizing:border-box;"></div>
<div style="top:283.71px;line-height:17px;font-size:11px;color:#404040;white-space:pre;letter-spacing:-0.215px;left:1366px;">Verlo</div>
<svg style="left:1684px;top:287px;" width="10" height="10" viewBox="0 0 10 10"><circle cx="6" cy="4" r="3" stroke="#555" stroke-width="1" fill="none"/><path d="M3.800 6.200L0.800 9.200" stroke="#555" stroke-width="1.200"/></svg>
<svg style="left:1701px;top:290.5px;" width="6" height="3" viewBox="0 0 6 3"><path d="M0 0H6L3 3Z" fill="#555"/></svg>
<div style="top:309.71px;line-height:17px;font-size:11px;color:#404040;white-space:pre;letter-spacing:-0.133px;left:1263px;">Nazwa podmiotu:</div>
<div style="left:1361px;top:308px;width:353px;height:43px;background:#e9e9e9;border:1px solid #d4d4d4;box-sizing:border-box;"></div>
<div style="top:308.38px;line-height:16px;font-size:10.5px;color:#404040;white-space:pre;letter-spacing:-0.518px;left:1366px;">VERLOGIC SYSTEMY KOMPUTEROWE TOMASZ MAREK</div>
<div style="top:358.71px;line-height:17px;font-size:11px;color:#404040;white-space:pre;letter-spacing:-0.246px;left:1263px;">Numer NIP:</div>
<div style="left:1361px;top:357px;width:353px;height:20px;background:#e9e9e9;border:1px solid #d4d4d4;box-sizing:border-box;"></div>
<div style="top:358.71px;line-height:17px;font-size:11px;color:#404040;white-space:pre;letter-spacing:-0.118px;left:1366px;">8133273020</div>
<svg style="left:1684px;top:362px;" width="10" height="10" viewBox="0 0 10 10"><circle cx="6" cy="4" r="3" stroke="#555" stroke-width="1" fill="none"/><path d="M3.800 6.200L0.800 9.200" stroke="#555" stroke-width="1.200"/></svg>
<svg style="left:1699px;top:361px;" width="12" height="10" viewBox="0 0 12 10"><path d="M1 5.500L4 8.500L10.500 1.500" stroke="#3a78c0" stroke-width="1.400" fill="none"/></svg>
<div style="top:384.71px;line-height:17px;font-size:11px;color:#404040;white-space:pre;letter-spacing:0.035px;left:1263px;">Adres:</div>
<div style="left:1361px;top:383px;width:353px;height:51px;background:#e9e9e9;border:1px solid #d4d4d4;box-sizing:border-box;"></div>
<div style="top:383.38px;line-height:16px;font-size:10.5px;color:#404040;white-space:pre;letter-spacing:0.057px;left:1366px;">35-303 Rzeszów</div>
<div style="top:396.38px;line-height:16px;font-size:10.5px;color:#404040;white-space:pre;letter-spacing:0.039px;left:1366px;">al. Niepodległości</div>
<svg style="left:1701px;top:315px;" width="7" height="4" viewBox="0 0 7 4"><path d="M0 4H7L3.500 0Z" fill="#c4c4c4"/></svg>
<svg style="left:1701px;top:390px;" width="7" height="4" viewBox="0 0 7 4"><path d="M0 4H7L3.500 0Z" fill="#c4c4c4"/></svg>
<svg style="left:1701px;top:339px;" width="7" height="4" viewBox="0 0 7 4"><path d="M0 0H7L3.500 4Z" fill="#c4c4c4"/></svg>
<svg style="left:1701px;top:422px;" width="7" height="4" viewBox="0 0 7 4"><path d="M0 0H7L3.500 4Z" fill="#c4c4c4"/></svg>
<div style="left:1725px;top:250px;width:135px;height:191px;background:#ebebeb;border:1px solid #c6c6c6;box-sizing:border-box;"></div>
<div style="left:1726px;top:251px;width:133px;height:25px;background:#e1e1e1;"></div>
<div style="top:254.47px;line-height:17px;font-size:11.7px;color:#3a3a3a;white-space:pre;letter-spacing:0.115px;font-weight:bold;left:1737px;">Operacje</div>
<div style="left:1741px;top:279px;width:103px;height:26px;background:#fff;border:1px solid #b9b9b9;box-sizing:border-box;"></div>
<div style="top:283.71px;line-height:17px;font-size:11px;color:#404040;white-space:pre;letter-spacing:-0.198px;left:1751.2px;">Powiel dokument</div>
<div style="left:1741px;top:311px;width:103px;height:26px;background:#fff;border:1px solid #b9b9b9;box-sizing:border-box;"></div>
<div style="top:315.71px;line-height:17px;font-size:11px;color:#404040;white-space:pre;letter-spacing:-0.084px;left:1756.3px;">Drukuj duplikat</div>
<div style="left:1741px;top:344px;width:103px;height:26px;background:#fff;border:1px solid #b9b9b9;box-sizing:border-box;"></div>
<div style="left:1826px;top:344px;width:1px;height:26px;background:#b9b9b9;"></div>
<svg style="left:1832.0px;top:356.0px;" width="6" height="3" viewBox="0 0 6 3"><path d="M0 0H6L3 3Z" fill="#555"/></svg>
<div style="top:348.71px;line-height:17px;font-size:11px;color:#404040;white-space:pre;letter-spacing:-0.101px;left:1764.2px;">Korekta</div>
<div style="left:1741px;top:376px;width:103px;height:26px;background:#fff;border:1px solid #b9b9b9;box-sizing:border-box;"></div>
<div style="left:1826px;top:376px;width:1px;height:26px;background:#b9b9b9;"></div>
<svg style="left:1832.0px;top:388.0px;" width="6" height="3" viewBox="0 0 6 3"><path d="M0 0H6L3 3Z" fill="#555"/></svg>
<div style="top:380.71px;line-height:17px;font-size:11px;color:#404040;white-space:pre;letter-spacing:-0.176px;left:1756.3px;">Przekształć</div>
<div style="left:1741px;top:408px;width:103px;height:26px;background:#fff;border:1px solid #b9b9b9;box-sizing:border-box;"></div>
<div style="top:412.71px;line-height:17px;font-size:11px;color:#404040;white-space:pre;letter-spacing:0.204px;left:1754.3px;">Netto -&gt; Brutto</div>
<div style="left:836px;top:447px;width:1024px;height:278px;background:#ebebeb;border:1px solid #c6c6c6;box-sizing:border-box;"></div>
<div style="left:837px;top:448px;width:1022px;height:23px;background:#e1e1e1;"></div>
<div style="top:451.47px;line-height:17px;font-size:11.7px;color:#3a3a3a;white-space:pre;letter-spacing:0.061px;font-weight:bold;left:848px;">Pozycje</div>
<div style="left:841px;top:471px;width:1014px;height:249px;background:#fff;border:1px solid #bdbdbd;box-sizing:border-box;"></div>
<div style="left:842px;top:472px;width:1012px;height:24px;background:#ebebeb;"></div>
<div style="left:842px;top:496px;width:1012px;height:1px;background:#c9c9c9;"></div>
<div style="left:842px;top:497px;width:36px;height:27px;background:#fff;"></div>
<div style="left:878px;top:497px;width:976px;height:26px;background:#e3e3e3;"></div>
<div style="left:906px;top:497px;width:180px;height:26px;background:#fff;"></div>
<div style="left:877px;top:472px;width:1px;height:78px;background:#c9c9c9;"></div>
<div style="left:905px;top:472px;width:1px;height:78px;background:#c9c9c9;"></div>
<div style="top:475.71px;line-height:17px;font-size:11px;color:#404040;white-space:pre;letter-spacing:-0.404px;left:912px;">Opis</div>
<div style="left:1086px;top:472px;width:1px;height:78px;background:#c9c9c9;"></div>
<div style="top:475.71px;line-height:17px;font-size:11px;color:#404040;white-space:pre;letter-spacing:0.018px;left:1093px;">Cena netto</div>
<div style="left:1168px;top:472px;width:1px;height:78px;background:#c9c9c9;"></div>
<div style="top:475.71px;line-height:17px;font-size:11px;color:#404040;white-space:pre;letter-spacing:-0.024px;left:1175px;">Rabat (...</div>
<div style="left:1225px;top:472px;width:1px;height:78px;background:#c9c9c9;"></div>
<div style="top:475.71px;line-height:17px;font-size:11px;color:#404040;white-space:pre;letter-spacing:-0.078px;left:1232px;">Cena z raba...</div>
<div style="left:1307px;top:472px;width:1px;height:78px;background:#c9c9c9;"></div>
<div style="top:475.71px;line-height:17px;font-size:11px;color:#404040;white-space:pre;letter-spacing:0.047px;left:1314px;">Cena brutto</div>
<div style="left:1389px;top:472px;width:1px;height:78px;background:#c9c9c9;"></div>
<div style="top:475.71px;line-height:17px;font-size:11px;color:#404040;white-space:pre;letter-spacing:-0.124px;left:1396px;">Ilość</div>
<div style="left:1446px;top:472px;width:1px;height:78px;background:#c9c9c9;"></div>
<div style="top:475.71px;line-height:17px;font-size:11px;color:#404040;white-space:pre;letter-spacing:-1.073px;left:1453px;">GTU</div>
<div style="left:1528px;top:472px;width:1px;height:78px;background:#c9c9c9;"></div>
<div style="top:475.71px;line-height:17px;font-size:11px;color:#404040;white-space:pre;letter-spacing:0.119px;left:1535px;">Wartość netto</div>
<div style="left:1610px;top:472px;width:1px;height:78px;background:#c9c9c9;"></div>
<div style="top:475.71px;line-height:17px;font-size:11px;color:#404040;white-space:pre;letter-spacing:-0.073px;left:1617px;">Vat (...</div>
<div style="left:1659px;top:472px;width:1px;height:78px;background:#c9c9c9;"></div>
<div style="top:475.71px;line-height:17px;font-size:11px;color:#404040;white-space:pre;letter-spacing:0.135px;left:1666px;">Wartość brutto</div>
<div style="left:1749px;top:472px;width:1px;height:78px;background:#c9c9c9;"></div>
<div style="top:475.71px;line-height:17px;font-size:11px;color:#404040;white-space:pre;letter-spacing:-0.209px;left:1756px;">Rodzaj pozycji</div>
<div style="left:877px;top:523px;width:977px;height:1px;background:#c9c9c9;"></div>
<div style="left:877px;top:550px;width:977px;height:1px;background:#c9c9c9;"></div>
<svg style="left:891px;top:480px;" width="9" height="8" viewBox="0 0 9 8"><path d="M0 1.500H3M0 4.500H6M0 7.500H9" stroke="#a8a8a8" stroke-width="1"/></svg>
<svg style="left:849px;top:506px;" width="10" height="9" viewBox="0 0 10 9"><path d="M0.500 4.500H9M5.500 1L9 4.500L5.500 8" stroke="#fd7e66" stroke-width="1" fill="none"/></svg>
<svg style="left:850px;top:533px;" width="9" height="9" viewBox="0 0 9 9"><path d="M4.500 0.300V8.700M0.300 4.500H8.700M1.600 1.600L7.400 7.400M7.400 1.600L1.600 7.400" stroke="#a3a3a3" stroke-width="1.100"/><circle cx="4.500" cy="4.500" r="2.400" fill="#9a9a9a"/></svg>
<div style="top:501.71px;line-height:17px;font-size:11px;color:#404040;white-space:pre;letter-spacing:-0.275px;right:1020.28px;text-align:right;">1</div>
<div style="top:501.71px;line-height:17px;font-size:11px;color:#404040;white-space:pre;letter-spacing:-0.300px;left:912px;">Zlecenie1</div>
<svg style="left:1073px;top:509.5px;" width="6" height="3" viewBox="0 0 6 3"><path d="M0 0H6L3 3Z" fill="#555"/></svg>
<div style="top:501.71px;line-height:17px;font-size:11px;color:#404040;white-space:pre;letter-spacing:-0.241px;right:757.24px;text-align:right;">1 200,00</div>
<div style="top:501.71px;line-height:17px;font-size:11px;color:#404040;white-space:pre;letter-spacing:-0.281px;right:700.28px;text-align:right;">0,00%</div>
<div style="top:501.71px;line-height:17px;font-size:11px;color:#404040;white-space:pre;letter-spacing:-0.241px;right:618.24px;text-align:right;">1 200,00</div>
<div style="top:501.71px;line-height:17px;font-size:11px;color:#404040;white-space:pre;letter-spacing:-0.241px;right:536.24px;text-align:right;">1 476,00</div>
<div style="top:501.71px;line-height:17px;font-size:11px;color:#404040;white-space:pre;letter-spacing:-0.248px;right:479.25px;text-align:right;">1,000</div>
<div style="top:501.71px;line-height:17px;font-size:11px;color:#404040;white-space:pre;letter-spacing:-0.241px;right:315.24px;text-align:right;">1 200,00</div>
<div style="top:501.71px;line-height:17px;font-size:11px;color:#404040;white-space:pre;letter-spacing:-0.241px;right:176.24px;text-align:right;">1 476,00</div>
<div style="top:501.71px;line-height:17px;font-size:11px;color:#404040;white-space:pre;letter-spacing:-0.165px;left:1453px;">-</div>
<div style="top:501.71px;line-height:17px;font-size:11px;color:#404040;white-space:pre;letter-spacing:-0.118px;left:1617px;">23</div>
<div style="top:501.71px;line-height:17px;font-size:11px;color:#404040;white-space:pre;letter-spacing:-0.374px;left:1756px;">Usługa</div>
<div style="top:528.71px;line-height:17px;font-size:11px;color:#404040;white-space:pre;letter-spacing:0.120px;left:1453px;">Wybierz...</div>
<div style="top:528.71px;line-height:17px;font-size:11px;color:#404040;white-space:pre;letter-spacing:-0.074px;left:1617px;">Wybi...</div>
<div style="top:528.71px;line-height:17px;font-size:11px;color:#404040;white-space:pre;letter-spacing:0.120px;left:1756px;">Wybierz...</div>
<div style="left:842px;top:690px;width:1012px;height:1px;background:#d0d0d0;"></div>
<div style="top:696.47px;line-height:17px;font-size:11.7px;color:#333;white-space:pre;letter-spacing:0.399px;font-weight:bold;right:314.60px;text-align:right;">1 200,00</div>
<div style="top:696.47px;line-height:17px;font-size:11.7px;color:#333;white-space:pre;letter-spacing:0.399px;font-weight:bold;right:175.60px;text-align:right;">1 476,00</div>
<div style="left:836px;top:731px;width:366px;height:166px;background:#ebebeb;border:1px solid #c6c6c6;box-sizing:border-box;"></div>
<div style="left:837px;top:732px;width:364px;height:25px;background:#e1e1e1;"></div>
<div style="top:735.47px;line-height:17px;font-size:11.7px;color:#3a3a3a;white-space:pre;letter-spacing:0.029px;font-weight:bold;left:848px;">Płatność</div>
<div style="top:764.71px;line-height:17px;font-size:11px;color:#404040;white-space:pre;letter-spacing:-0.031px;left:841px;">Termin płatności:</div>
<div style="left:941px;top:763px;width:256px;height:20px;background:#fff;border:1px solid #b9b9b9;box-sizing:border-box;"></div>
<div style="top:764.71px;line-height:17px;font-size:11px;color:#404040;white-space:pre;letter-spacing:-0.152px;left:946px;">W dniu sprzedaży</div>
<svg style="left:1184px;top:771.5px;" width="6" height="3" viewBox="0 0 6 3"><path d="M0 0H6L3 3Z" fill="#555"/></svg>
<div style="top:790.71px;line-height:17px;font-size:11px;color:#404040;white-space:pre;letter-spacing:0.016px;left:841px;">Data płatności:</div>
<div style="left:941px;top:789px;width:256px;height:20px;background:#fff;border:1px solid #b9b9b9;box-sizing:border-box;"></div>
<div style="top:790.71px;line-height:17px;font-size:11px;color:#404040;white-space:pre;letter-spacing:0.195px;left:946px;">12.01.2023</div>
<svg style="left:1184px;top:797.5px;" width="6" height="3" viewBox="0 0 6 3"><path d="M0 0H6L3 3Z" fill="#555"/></svg>
<div style="top:816.71px;line-height:17px;font-size:11px;color:#404040;white-space:pre;letter-spacing:-0.082px;left:841px;">Forma płatności:</div>
<div style="left:941px;top:815px;width:256px;height:20px;background:#e9e9e9;border:1px solid #d4d4d4;box-sizing:border-box;"></div>
<div style="top:816.71px;line-height:17px;font-size:11px;color:#404040;white-space:pre;letter-spacing:-0.201px;left:946px;">Gotówka</div>
<div style="left:939px;top:843px;width:16px;height:16px;background:#fff;border:1px solid #b5b5b5;box-sizing:border-box;"></div>
<div style="top:842.71px;line-height:17px;font-size:11px;color:#404040;white-space:pre;letter-spacing:-0.207px;left:957px;">Mechanizm podzielonej płatności</div>
<div style="left:941px;top:864px;width:254px;height:26px;background:#fff;border:1px solid #b9b9b9;box-sizing:border-box;"></div>
<div style="top:868.71px;line-height:17px;font-size:11px;color:#404040;white-space:pre;letter-spacing:-0.124px;left:990.9px;">Przejdź do dokumentu płatności</div>
<div style="left:1208px;top:731px;width:652px;height:166px;background:#ebebeb;border:1px solid #c6c6c6;box-sizing:border-box;"></div>
<div style="left:1209px;top:732px;width:650px;height:25px;background:#e1e1e1;"></div>
<div style="top:735.47px;line-height:17px;font-size:11.7px;color:#3a3a3a;white-space:pre;letter-spacing:-0.065px;font-weight:bold;left:1220px;">Rozliczenie</div>
<div style="top:764.71px;line-height:17px;font-size:11px;color:#404040;white-space:pre;letter-spacing:-0.226px;left:1213px;">Kasa:</div>
<div style="left:1330px;top:763px;width:245px;height:20px;background:#e9e9e9;border:1px solid #d4d4d4;box-sizing:border-box;"></div>
<div style="top:764.71px;line-height:17px;font-size:11px;color:#404040;white-space:pre;letter-spacing:-0.238px;left:1335px;">Kasa1</div>
<div style="top:790.71px;line-height:17px;font-size:11px;color:#404040;white-space:pre;letter-spacing:-0.177px;left:1213px;">Rachunek:</div>
<div style="left:1330px;top:789px;width:245px;height:20px;background:#fff;border:1px solid #b9b9b9;box-sizing:border-box;"></div>
<div style="top:790.71px;line-height:17px;font-size:11px;color:#404040;white-space:pre;letter-spacing:-0.054px;left:1335px;">PLN: Test</div>
<svg style="left:1563px;top:797.5px;" width="6" height="3" viewBox="0 0 6 3"><path d="M0 0H6L3 3Z" fill="#555"/></svg>
<div style="top:816.71px;line-height:17px;font-size:11px;color:#404040;white-space:pre;letter-spacing:0.159px;left:1213px;">Waluta:</div>
<div style="left:1330px;top:815px;width:120px;height:20px;background:#e9e9e9;border:1px solid #d4d4d4;box-sizing:border-box;"></div>
<div style="top:816.71px;line-height:17px;font-size:11px;color:#404040;white-space:pre;letter-spacing:-0.800px;left:1335px;">PLN</div>
<div style="top:763.71px;line-height:17px;font-size:11px;color:#404040;white-space:pre;letter-spacing:0.178px;left:1600px;">Wartość netto:</div>
<div style="left:1698px;top:763px;width:146px;height:20px;background:#e9e9e9;border:1px solid #d4d4d4;box-sizing:border-box;"></div>
<div style="top:764.71px;line-height:17px;font-size:11px;color:#404040;white-space:pre;letter-spacing:-0.241px;right:82.24px;text-align:right;">1 200,00</div>
<div style="top:789.71px;line-height:17px;font-size:11px;color:#404040;white-space:pre;letter-spacing:0.118px;left:1600px;">Wartość VAT:</div>
<div style="left:1698px;top:789px;width:146px;height:20px;background:#e9e9e9;border:1px solid #d4d4d4;box-sizing:border-box;"></div>
<div style="top:790.71px;line-height:17px;font-size:11px;color:#404040;white-space:pre;letter-spacing:-0.252px;right:82.25px;text-align:right;">276,00</div>
<div style="top:816.71px;line-height:17px;font-size:11px;color:#404040;white-space:pre;letter-spacing:-0.355px;left:1600px;">Suma zaliczek:</div>
<div style="left:1698px;top:815px;width:146px;height:20px;background:#e9e9e9;border:1px solid #d4d4d4;box-sizing:border-box;"></div>
<div style="top:816.71px;line-height:17px;font-size:11px;color:#404040;white-space:pre;letter-spacing:-0.241px;right:82.24px;text-align:right;">0,00</div>
<div style="top:841.47px;line-height:17px;font-size:11.7px;color:#333;white-space:pre;letter-spacing:0.223px;font-weight:bold;left:1600px;">Wartość brutto:</div>
<div style="left:1698px;top:841px;width:146px;height:20px;background:#e9e9e9;border:1px solid #d4d4d4;box-sizing:border-box;"></div>
<div style="top:842.71px;line-height:17px;font-size:11px;color:#404040;white-space:pre;letter-spacing:-0.241px;right:82.24px;text-align:right;">1 476,00</div>
<div style="top:868.47px;line-height:17px;font-size:11.7px;color:#333;white-space:pre;letter-spacing:0.236px;font-weight:bold;left:1600px;">Do zapłaty:</div>
<div style="left:1698px;top:867px;width:146px;height:20px;background:#e9e9e9;border:1px solid #d4d4d4;box-sizing:border-box;"></div>
<div style="top:868.71px;line-height:17px;font-size:11px;color:#404040;white-space:pre;letter-spacing:-0.241px;right:82.24px;text-align:right;">1 476,00</div>
<div style="left:707px;top:911px;width:103px;height:32px;background:#fff;border:1px solid #555;box-sizing:border-box;"></div>
<div style="top:918.71px;line-height:17px;font-size:11px;color:#404040;white-space:pre;letter-spacing:-0.053px;left:734.4px;">Zatwierdź</div>
<div style="left:709px;top:913px;width:99px;height:28px;border:1px dotted #333;box-sizing:border-box;"></div>
<div style="left:816px;top:911px;width:103px;height:32px;background:#fff;border:1px solid #b9b9b9;box-sizing:border-box;"></div>
<div style="left:901px;top:911px;width:1px;height:32px;background:#b9b9b9;"></div>
<svg style="left:907.0px;top:926.0px;" width="6" height="3" viewBox="0 0 6 3"><path d="M0 0H6L3 3Z" fill="#555"/></svg>
<div style="top:918.71px;line-height:17px;font-size:11px;color:#404040;white-space:pre;letter-spacing:-0.098px;left:842.2px;">Drukuj</div>
<div style="left:925px;top:911px;width:103px;height:32px;background:#fff;border:1px solid #b9b9b9;box-sizing:border-box;"></div>
<div style="top:918.71px;line-height:17px;font-size:11px;color:#404040;white-space:pre;letter-spacing:-0.136px;left:961.6px;">Wyślij</div>
<div style="left:1034px;top:911px;width:103px;height:32px;background:#fff;border:1px solid #b9b9b9;box-sizing:border-box;"></div>
<div style="top:918.71px;line-height:17px;font-size:11px;color:#404040;white-space:pre;letter-spacing:-0.269px;left:1064.4px;">Odśwież</div>
<div style="left:1759px;top:911px;width:103px;height:32px;background:#fff;border:1px solid #b9b9b9;box-sizing:border-box;"></div>
<div style="top:918.71px;line-height:17px;font-size:11px;color:#404040;white-space:pre;letter-spacing:-0.415px;left:1791.7px;">Zamknij</div>
<svg style="left:14px;top:84px;" width="25" height="23" viewBox="0 0 25 23"><g fill="none" stroke="#86b8da" stroke-width="1"><rect x="0.5" y="0.5" width="19" height="15.5" rx="1"/><path d="M0.500 4.500H19.500M7 4.500V16M12.500 4.500V10M7 7.500H19M7 10.500H12"/><path d="M2 2.500H6" stroke-dasharray="1 1"/><rect x="1" y="5" width="5.500" height="2.500" fill="#86b8da" stroke="none"/><rect x="1" y="8.500" width="5.500" height="2" fill="#86b8da" stroke="none" opacity="0.7"/><rect x="1" y="11.500" width="5.500" height="1.500" fill="#86b8da" stroke="none" opacity="0.7"/><rect x="1" y="13.800" width="5.500" height="2" fill="#86b8da" stroke="none"/><path d="M23.99 12.99L23.99 15.61L22.31 15.79L21.66 17.35L22.72 18.67L20.87 20.52L19.55 19.46L17.99 20.11L17.81 21.79L15.19 21.79L15.01 20.11L13.45 19.46L12.13 20.52L10.28 18.67L11.34 17.35L10.69 15.79L9.01 15.61L9.01 12.99L10.69 12.81L11.34 11.25L10.28 9.93L12.13 8.08L13.45 9.14L15.01 8.49L15.19 6.81L17.81 6.81L17.99 8.49L19.55 9.14L20.87 8.08L22.72 9.93L21.66 11.25L22.31 12.81Z" fill="#07679f"/><circle cx="16.500" cy="14.300" r="4.200"/><circle cx="16.500" cy="14.300" r="3"/></g></svg>
<svg style="left:14px;top:389px;" width="25" height="25" viewBox="0 0 25 25"><g fill="none" stroke="#86b8da" stroke-width="1"><path d="M2.500 5.500V1.500a1 1 0 0 1 1-1H7.500a1 1 0 0 1 1 1V5.500"/><path d="M3.500 3.500H7.500" /><rect x="0.500" y="5.500" width="10" height="18" rx="1.200"/><rect x="2.500" y="10.500" width="6" height="2" fill="#86b8da"/><path d="M3 16.500H4M5 16.500H6M7 16.500H8M3 18.500H4M5 18.500H6M7 18.500H8M3 20.500H4M5 20.500H6M7 20.500H8" opacity="0.8"/><path d="M10.500 8.500H12a1 1 0 0 1 1 1V19.500a1 1 0 0 1-1 1H10.500" /><rect x="15.500" y="7.500" width="8" height="13" rx="1"/><path d="M17.500 10.500V11.500M17.500 15V18M21.500 10.500V11.500M21.500 13V14M21.500 15.500V16.500M21.500 18V19" opacity="0.8"/></g></svg>
<svg style="left:13px;top:938px;" width="27" height="24" viewBox="0 0 27 24"><g fill="none" stroke="#86b8da" stroke-width="1"><rect x="0.500" y="0.500" width="18.500" height="15"/><path d="M0.500 4.500H19M0.500 8H19M0.500 11.500H19M6.500 0.500V15.500M12.500 0.500V15.500"/><rect x="7" y="1" width="5.500" height="3.500" fill="#86b8da" stroke="none"/><rect x="1" y="8.500" width="5.500" height="3" fill="#86b8da" stroke="none"/><rect x="7" y="5" width="5.500" height="6.500" fill="#86b8da" stroke="none" opacity="0.45"/><circle cx="20" cy="10" r="5.800" fill="#07679f"/><circle cx="20" cy="10.500" r="3.600"/><path d="M15.500 8.500A5 5 0 0 1 24.500 8.500"/><path d="M14.500 22.500V20a3.500 3.500 0 0 1 3.500-3.500H22.500a3.500 3.500 0 0 1 3.500 3.500V22.500Z" fill="#07679f"/></g></svg>
<svg style="left:17px;top:978px;" width="19" height="25" viewBox="0 0 19 25"><g fill="none" stroke="#a9b9cf" stroke-width="1"><path d="M5.500 19.500V23.500H17.500V6.500H15.500"/><path d="M3.500 17.500V21.500H15.500V3.500H13.500"/><path d="M0.500 2.500L2.500 0.500H13.500V18.500H0.500Z" fill="#fd7e66"/></g></svg>
<svg style="left:66px;top:978px;" width="27" height="26" viewBox="0 0 27 26"><g fill="none" stroke="#86b8da" stroke-width="1"><rect x="0.500" y="0.500" width="22" height="18"/><path d="M0.500 3.500H22.500M0.500 7.500H22.500M0.500 11.500H22.500M0.500 15.500H22.500M4.500 3.500V18.500M8.500 3.500V18.500M12.500 3.500V18.500M16.500 3.500V18.500"/><rect x="5" y="4.500" width="3" height="3" fill="#86b8da" stroke="none"/><rect x="9" y="15.500" width="3" height="3" fill="#86b8da" stroke="none"/><circle cx="19.500" cy="19" r="6" fill="#07679f"/><path d="M19.500 15.500V19.500H22"/></g></svg>
<svg style="left:116px;top:978px;" width="28" height="26" viewBox="0 0 28 26"><g fill="none" stroke="#86b8da" stroke-width="1"><path d="M3.500 13V20L10.500 24.500L17.500 20V13M10.500 16.500V24.500"/><path d="M3.500 13L10.500 16.500L17.500 13M3.500 13L1 10.500L5.500 8.500M17.500 13L19.500 11"/><path d="M6.500 6.500L11 4.500L15.500 6.500V11.500L11 14L6.500 11.500Z" fill="#07679f"/><path d="M6.500 6.500L11 8.800L15.500 6.500L11 4.500Z" fill="#86b8da"/><path d="M11 8.800V14"/><path d="M17.500 3V16.500c0 1.200 2 2 4.500 2s4.500-0.800 4.500-2V3"/><ellipse cx="22" cy="3" rx="4.500" ry="1.800"/><path d="M17.500 6.500c0 1.200 2 2 4.500 2s4.500-0.800 4.500-2M17.500 10c0 1.200 2 2 4.500 2s4.500-0.800 4.500-2M17.500 13.500c0 1.200 2 2 4.500 2s4.500-0.800 4.500-2"/></g></svg>
<svg style="left:172px;top:977px;" width="21" height="27" viewBox="0 0 21 27"><g fill="none" stroke="#86b8da" stroke-width="1"><rect x="1.500" y="5.500" width="17" height="14" rx="1.500"/><path d="M6 19.500V22.500M14 19.500V22.500M3 22.500H17.500L18.500 25.500H1.500Z"/><path d="M10 2.500a3.800 3.800 0 0 1 3.500 5.200L11.500 12.500H8.500L6.500 7.700A3.800 3.800 0 0 1 10 2.500Z" fill="#07679f"/><path d="M8.800 14H11.200M9.300 15.500H10.700M10 0V1.200M6 1.500L6.700 2.500M14 1.500L13.300 2.500"/></g></svg>
</div></body></html>
